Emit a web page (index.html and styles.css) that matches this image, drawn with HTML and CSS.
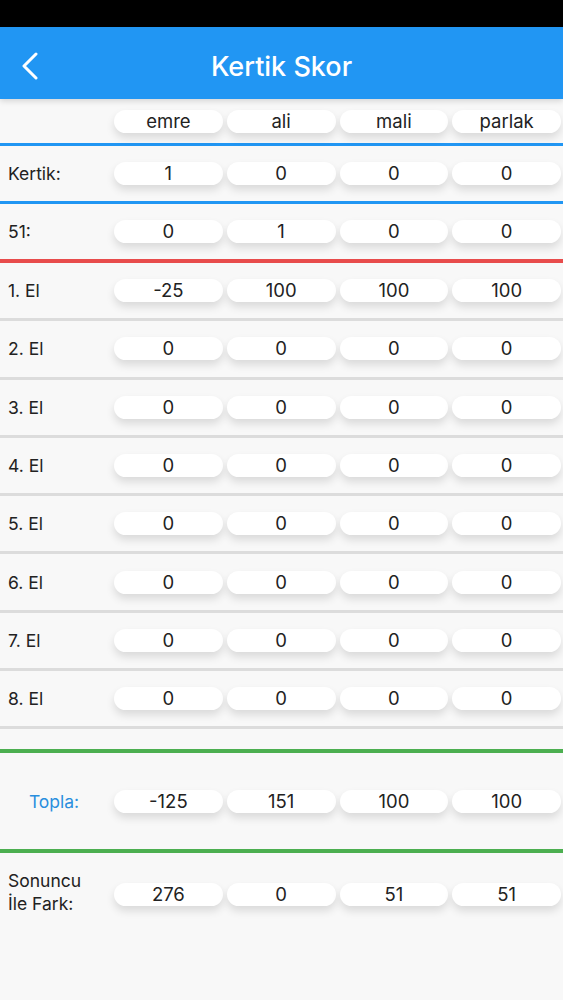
FILE: index.html
```html
<!DOCTYPE html>
<html lang="tr">
<head>
    <meta charset="UTF-8">
    <meta name="viewport" content="width=device-width, initial-scale=1.0">
    <title>Kertik Skor</title>
    <link rel="stylesheet" href="styles.css">
</head>
<body>
    <div class="status-bar"></div>
    <header class="app-bar">
        <button class="back-btn" aria-label="Geri">
            <svg width="20" height="28" viewBox="0 0 20 28">
                <polyline points="15,2 3,14 15,26" fill="none" stroke="#fff" stroke-width="3" stroke-linecap="round" stroke-linejoin="round"/>
            </svg>
        </button>
        <h1 class="title">Kertik Skor</h1>
    </header>

    <main class="board">
        <div class="row row-head">
            <div class="label"></div>
            <div class="pill">emre</div>
            <div class="pill">ali</div>
            <div class="pill">mali</div>
            <div class="pill">parlak</div>
        </div>
        <div class="line line-blue"></div>

        <div class="row">
            <div class="label">Kertik:</div>
            <div class="pill">1</div>
            <div class="pill">0</div>
            <div class="pill">0</div>
            <div class="pill">0</div>
        </div>
        <div class="line line-blue"></div>

        <div class="row">
            <div class="label">51:</div>
            <div class="pill">0</div>
            <div class="pill">1</div>
            <div class="pill">0</div>
            <div class="pill">0</div>
        </div>
        <div class="line line-red"></div>

        <div id="hands"></div>

        <div class="line line-green spaced"></div>
        <div class="row row-total">
            <div class="label label-total">Topla:</div>
            <div class="pill">-125</div>
            <div class="pill">151</div>
            <div class="pill">100</div>
            <div class="pill">100</div>
        </div>
        <div class="line line-green"></div>

        <div class="row row-diff">
            <div class="label">Sonuncu<br>İle Fark:</div>
            <div class="pill">276</div>
            <div class="pill">0</div>
            <div class="pill">51</div>
            <div class="pill">51</div>
        </div>
    </main>

    <script>
        // Score for each hand (el), one value per player
        const hands = [
            [-25, 100, 100, 100],
            [0, 0, 0, 0],
            [0, 0, 0, 0],
            [0, 0, 0, 0],
            [0, 0, 0, 0],
            [0, 0, 0, 0],
            [0, 0, 0, 0],
            [0, 0, 0, 0]
        ];

        const container = document.getElementById('hands');
        hands.forEach((scores, i) => {
            const row = document.createElement('div');
            row.className = 'row row-hand';
            row.innerHTML = `<div class="label">${i + 1}. El</div>` +
                scores.map(s => `<div class="pill">${s}</div>`).join('');
            container.appendChild(row);
        });
    </script>
</body>
</html>
```

FILE: styles.css
```css
body {
    margin: 0;
    font-family: Inter, "Noto Sans", sans-serif;
    background-color: #f8f8f8;
    color: #222;
}

.status-bar {
    height: 27px;
    background: #000;
}

.app-bar {
    height: 72px;
    background-color: #2196f3;
    display: flex;
    align-items: center;
    justify-content: center;
    position: relative;
    box-shadow: 0 2px 6px rgba(0, 0, 0, 0.15);
}

.back-btn {
    position: absolute;
    left: 21px;
    top: 25px;
    padding: 0;
    border: none;
    background: none;
}

.title {
    margin: 6px 0 0 0;
    color: #fff;
    font-size: 27px;
    font-weight: 500;
}

.row {
    display: grid;
    grid-template-columns: 110px repeat(4, 1fr);
    column-gap: 4px;
    align-items: center;
    padding-right: 2px;
    height: 55px;
}

.row-head {
    height: 44px;
}

.row-hand {
    height: 55.3px;
    border-bottom: 3px solid #dcdcdc;
}

.row-total {
    height: 96px;
}

.row-diff {
    height: 82px;
}

.label {
    padding-left: 8px;
    font-size: 17.5px;
    line-height: 23px;
}

.row-diff .label {
    margin-top: -4px;
}

.label-total {
    padding-left: 0;
    padding-right: 2px;
    text-align: center;
    color: #2a8fde;
}

.pill {
    height: 23px;
    line-height: 23px;
    background: #fff;
    border-radius: 12px;
    text-align: center;
    font-size: 18.5px;
    box-shadow: 0 5px 8px rgba(0, 0, 0, 0.12);
}

.line {
    height: 3px;
}

.line-blue {
    background-color: #2196f3;
}

.line-red {
    height: 4px;
    background-color: #e84c4c;
}

.line-green {
    height: 4px;
    background-color: #4caf50;
}

.spaced {
    margin-top: 20px;
}
```
